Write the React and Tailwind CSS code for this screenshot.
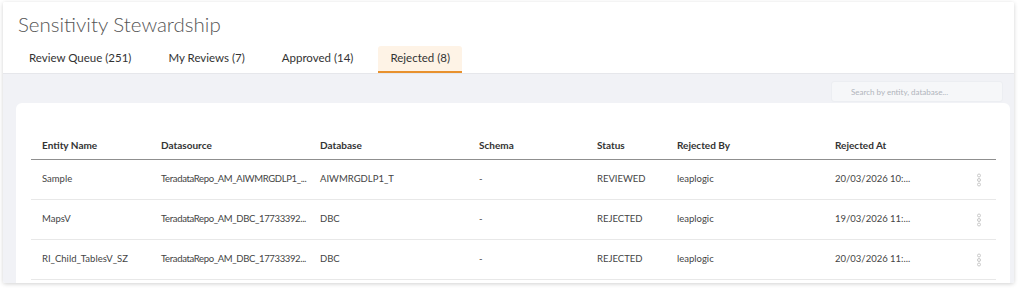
import React from 'react';

const tabs = [
  { label: 'Review Queue (251)' },
  { label: 'My Reviews (7)' },
  { label: 'Approved (14)' },
  { label: 'Rejected (8)', active: true },
];

const columns = [
  { key: 'entity', label: 'Entity Name', w: 'w-[119px]' },
  { key: 'source', label: 'Datasource', w: 'w-[159px]', cell: 'tracking-[-0.35px]' },
  { key: 'db', label: 'Database', w: 'w-[159px]' },
  { key: 'schema', label: 'Schema', w: 'w-[118px]' },
  { key: 'status', label: 'Status', w: 'w-[80px]' },
  { key: 'by', label: 'Rejected By', w: 'w-[158px]' },
  { key: 'at', label: 'Rejected At', w: 'w-[143px]' },
];

const rows = [
  { entity: 'Sample', source: 'TeradataRepo_AM_AIWMRGDLP1_...', db: 'AIWMRGDLP1_T', schema: '-', status: 'REVIEWED', by: 'leaplogic', at: '20/03/2026 10:...' },
  { entity: 'MapsV', source: 'TeradataRepo_AM_DBC_17733392...', db: 'DBC', schema: '-', status: 'REJECTED', by: 'leaplogic', at: '19/03/2026 11:...' },
  { entity: 'RI_Child_TablesV_SZ', source: 'TeradataRepo_AM_DBC_17733392...', db: 'DBC', schema: '-', status: 'REJECTED', by: 'leaplogic', at: '20/03/2026 11:...' },
];

const Kebab = () => (
  <svg width="6" height="14" viewBox="0 0 6 14" fill="none" stroke="#c8c8c8" strokeWidth="1">
    <circle cx="3" cy="2.5" r="1.5" />
    <circle cx="3" cy="7" r="1.5" />
    <circle cx="3" cy="11.5" r="1.5" />
  </svg>
);

export default function App() {
  return (
    <div className="w-[1024px] h-[290px] bg-white pt-[2px] pl-[3px] font-['Lato',sans-serif]">
      <div className="w-[1011px] h-[281px] flex flex-col overflow-hidden rounded-[2px] shadow-[0_1px_4px_rgba(0,0,0,0.18)]">
        {/* header */}
        <div className="bg-white border-b border-[#e6e7eb]">
          <h1 className="pl-[15px] pt-[7px] h-[44px] text-[20.5px] leading-[30px] font-light text-[#555]">
            Sensitivity Stewardship
          </h1>
          <div className="flex gap-[13px] pl-[14px] h-[27px]">
            {tabs.map((t) => (
              <div
                key={t.label}
                className={
                  t.active
                    ? 'px-[12px] pb-[1px] flex items-center text-[11.5px] text-[#333] bg-[#fef3e6] border-b-2 border-[#e8912d] rounded-t-[3px]'
                    : 'px-[12px] pb-[3px] flex items-center text-[11.5px] text-[#333]'
                }
              >
                {t.label}
              </div>
            ))}
          </div>
        </div>

        {/* body */}
        <div className="flex-1 bg-[#f1f2f6] pt-[7px] pl-[13px] pr-[4px]">
          <div className="flex justify-end pr-[7px]">
            <div className="w-[172px] h-[21px] bg-[#f6f7f9] border border-[#eceef2] rounded-[3px] flex items-center pl-[19px] text-[8px] text-[#b0b4bc]">
              Search by entity, database...
            </div>
          </div>
          <div className="mt-[1px] bg-white rounded-t-[6px] pl-[15px] pr-[14px] pt-[29px] h-[200px]">
            <div className="flex h-[28px] items-center border-b border-[#8f8f8f] text-[10px] font-bold text-[#333]">
              {columns.map((c) => (
                <div key={c.key} className={`${c.w} shrink-0 pl-[11px]`}>
                  {c.label}
                </div>
              ))}
            </div>
            {rows.map((r, i) => (
              <div key={i} className="flex h-[40px] items-center border-b border-[#e8e8e8] text-[9.5px] text-[#444]">
                {columns.map((c) => (
                  <div key={c.key} className={`${c.w} ${c.cell || ''} shrink-0 pl-[11px] whitespace-nowrap`}>
                    {r[c.key]}
                  </div>
                ))}
                <div className="pl-[9px] flex items-center">
                  <Kebab />
                </div>
              </div>
            ))}
          </div>
        </div>
      </div>
    </div>
  );
}
